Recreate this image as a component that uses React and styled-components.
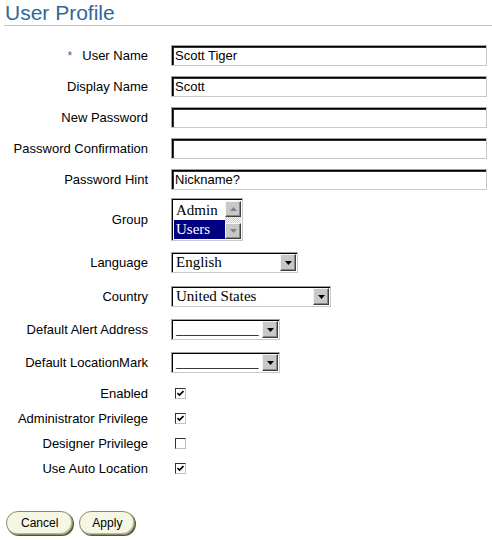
import React from 'react'
import styled, { createGlobalStyle } from 'styled-components'

const Global = createGlobalStyle`
    body {
        margin: 0;
        background: #fff;
        font-family: "Liberation Sans", Arial, sans-serif;
    }
`

const Page = styled.div`
    width: 492px;
    padding-bottom: 5px;
`

const Header = styled.h1`
    margin: 0 0 0 4px;
    padding-left: 1px;
    height: 25px;
    line-height: 25px;
    font-size: 21px;
    font-weight: normal;
    color: #336699;
    border-bottom: 1px solid #cccc99;
`

const Row = styled.div`
    display: grid;
    grid-template-columns: 148px 1fr;
    column-gap: 23px;
    align-items: center;
    height: ${p => p.$h || 21}px;
    margin-top: ${p => p.$mt || 0}px;
    margin-right: 5px;
`

const Label = styled.label`
    text-align: right;
    font-size: 13px;
    color: #000;
    white-space: nowrap;
`

const Required = styled.span`
    color: #336699;
    font-size: 12px;
    margin-right: 10px;
`

const TextInput = styled.input`
    box-sizing: border-box;
    width: 100%;
    height: 21px;
    margin: 0;
    padding: 0 3px;
    font-family: "Liberation Sans", Arial, sans-serif;
    font-size: 13px;
    color: #000;
    background: #fff;
    border: 1px solid;
    border-color: #a0a0a0 #c8c8c8 #c8c8c8 #a0a0a0;
    box-shadow: inset 1px 1px 0 #000, inset 2px 2px 0 #303030;
    outline: none;
`

const Drop = styled.div`
    box-sizing: border-box;
    width: ${p => p.$w}px;
    height: 21px;
    display: flex;
    align-items: center;
    background: #fff;
    border: 1px solid;
    border-color: #a0a0a0 #c8c8c8 #c8c8c8 #a0a0a0;
    box-shadow: inset 1px 1px 0 #000;
    padding: 1px 1px 1px 2px;
`

const DropText = styled.span`
    flex: 1;
    font-family: "Liberation Serif", "Times New Roman", serif;
    font-size: 15px;
    color: #000;
    padding-left: 2px;
    line-height: 17px;
    white-space: nowrap;
    overflow: hidden;
`

const ArrowButton = styled.span`
    box-sizing: border-box;
    width: 16px;
    height: 17px;
    display: flex;
    align-items: center;
    justify-content: center;
    background: #c8c8c8;
    border: 1px solid;
    border-color: #f4f4f4 #404040 #404040 #f4f4f4;
    box-shadow: inset -1px -1px 0 #888;
`

const Arrow = ({ up, color = '#000' }) => (
    <svg width="7" height="4" viewBox="0 0 7 4">
        <polygon points={up ? '3.5,0 7,4 0,4' : '0,0 7,0 3.5,4'} fill={color} />
    </svg>
)

const Dropdown = ({ w, text }) => (
    <Drop $w={w}>
        <DropText>{text}</DropText>
        <ArrowButton><Arrow /></ArrowButton>
    </Drop>
)

const ListBox = styled.div`
    box-sizing: border-box;
    width: 72px;
    height: 43px;
    display: flex;
    background: #fff;
    border: 1px solid;
    border-color: #a0a0a0 #c8c8c8 #c8c8c8 #a0a0a0;
    box-shadow: inset 1px 1px 0 #000;
    padding: 2px 1px 1px 2px;
`

const Options = styled.div`
    flex: 1;
    display: flex;
    flex-direction: column;
`

const Option = styled.div`
    height: 19px;
    line-height: 19px;
    padding-left: 2px;
    font-family: "Liberation Serif", "Times New Roman", serif;
    font-size: 15px;
    color: ${p => (p.$selected ? '#fff' : '#000')};
    background: ${p => (p.$selected ? '#000080' : '#fff')};
`

const ScrollBar = styled.div`
    width: 16px;
    display: flex;
    flex-direction: column;
    justify-content: space-between;
    background-color: #e8e8e8;
    background-image: repeating-conic-gradient(#c8c8c8 0 25%, #fff 0 50%);
    background-size: 2px 2px;
`

const ScrollButton = styled(ArrowButton)`
    width: 16px;
    height: 16px;
`

const CheckBox = styled.span`
    box-sizing: border-box;
    width: 11px;
    height: 11px;
    margin-left: 4px;
    display: flex;
    align-items: center;
    justify-content: center;
    background: #fff;
    border: 1px solid;
    border-color: #303030 #c0c0c0 #c0c0c0 #303030;
`

const Check = () => (
    <svg width="7" height="7" viewBox="0 0 7 7">
        <path d="M0.5 3 L2.5 5 L6.5 1" stroke="#000" strokeWidth="1.6" fill="none" />
    </svg>
)

const Buttons = styled.div`
    display: flex;
    gap: 6px;
    margin: 30px 0 0 6px;
`

const Button = styled.button`
    box-sizing: border-box;
    height: 24px;
    padding: 0 ${p => p.$pad}px;
    border-radius: 12px;
    font-family: "Liberation Sans", Arial, sans-serif;
    font-size: 12px;
    color: #000;
    background: #f6f6e4;
    border: 1px solid #8a8a66;
    box-shadow: 1px 1px 0 #555533, inset -1px -1px 0 #b8b89a;
`

const textRows = [
    { label: 'User Name', value: 'Scott Tiger', required: true },
    { label: 'Display Name', value: 'Scott' },
    { label: 'New Password', value: '' },
    { label: 'Password Confirmation', value: '' },
    { label: 'Password Hint', value: 'Nickname?' },
]

const checkRows = [
    { label: 'Enabled', checked: true },
    { label: 'Administrator Privilege', checked: true },
    { label: 'Designer Privilege', checked: false },
    { label: 'Use Auto Location', checked: true },
]

const App = () => {
    return (
        <Page>
            <Global />
            <Header>User Profile</Header>
            {textRows.map((r, i) => (
                <Row key={r.label} $mt={i === 0 ? 19 : 10}>
                    <Label>
                        {r.required && <Required>*</Required>}
                        {r.label}
                    </Label>
                    <TextInput defaultValue={r.value} type="text" />
                </Row>
            ))}
            <Row $mt={8} $h={43}>
                <Label>Group</Label>
                <ListBox>
                    <Options>
                        <Option>Admin</Option>
                        <Option $selected>Users</Option>
                    </Options>
                    <ScrollBar>
                        <ScrollButton><Arrow up color="#808080" /></ScrollButton>
                        <ScrollButton><Arrow color="#808080" /></ScrollButton>
                    </ScrollBar>
                </ListBox>
            </Row>
            <Row $mt={11}>
                <Label>Language</Label>
                <Dropdown w={127} text="English" />
            </Row>
            <Row $mt={13}>
                <Label>Country</Label>
                <Dropdown w={160} text="United States" />
            </Row>
            <Row $mt={12}>
                <Label>Default Alert Address</Label>
                <Dropdown w={109} text="___________" />
            </Row>
            <Row $mt={12}>
                <Label>Default LocationMark</Label>
                <Dropdown w={109} text="___________" />
            </Row>
            {checkRows.map((r, i) => (
                <Row key={r.label} $h={25} $mt={i === 0 ? 8 : 0}>
                    <Label>{r.label}</Label>
                    <CheckBox>{r.checked && <Check />}</CheckBox>
                </Row>
            ))}
            <Buttons>
                <Button $pad={14}>Cancel</Button>
                <Button $pad={12}>Apply</Button>
            </Buttons>
        </Page>
    )
}

export default App
